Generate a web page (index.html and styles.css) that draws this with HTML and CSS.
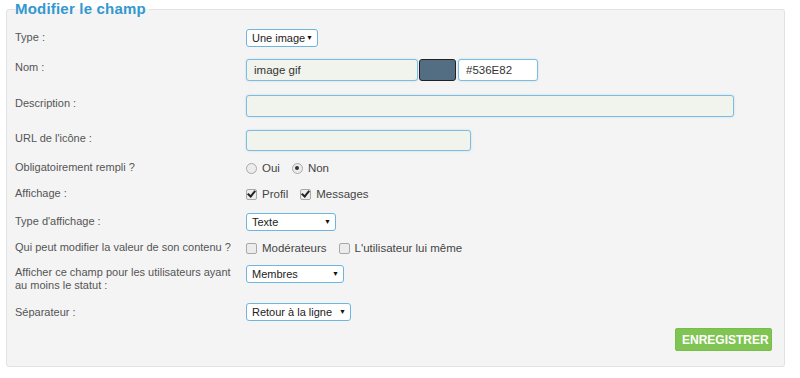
FILE: index.html
```html
<!DOCTYPE html>
<html lang="fr">
<head>
    <meta charset="UTF-8">
    <title>Modifier le champ</title>
    <link rel="stylesheet" href="styles.css">
</head>
<body>
    <form class="profile-field">
        <fieldset>
            <legend>Modifier le champ</legend>

            <div class="row row-type">
                <label>Type :</label>
                <div class="ctrl">
                    <span class="select-wrap w-type"><select><option>Une image</option></select></span>
                </div>
            </div>

            <div class="row row-nom">
                <label>Nom :</label>
                <div class="ctrl">
                    <input type="text" class="inp inp-nom" value="image gif">
                    <span class="swatch"></span>
                    <input type="text" class="inp inp-hex" value="#536E82">
                </div>
            </div>

            <div class="row row-desc">
                <label>Description :</label>
                <div class="ctrl">
                    <input type="text" class="inp inp-desc">
                </div>
            </div>

            <div class="row row-url">
                <label>URL de l'icône :</label>
                <div class="ctrl">
                    <input type="text" class="inp inp-url">
                </div>
            </div>

            <div class="row row-req">
                <label>Obligatoirement rempli ?</label>
                <div class="ctrl choices">
                    <span class="choice"><span class="radio"></span>Oui</span>
                    <span class="choice"><span class="radio on"></span>Non</span>
                </div>
            </div>

            <div class="row row-aff">
                <label>Affichage :</label>
                <div class="ctrl choices">
                    <span class="choice"><span class="check on"></span>Profil</span>
                    <span class="choice"><span class="check on"></span>Messages</span>
                </div>
            </div>

            <div class="row row-taff">
                <label>Type d'affichage :</label>
                <div class="ctrl">
                    <span class="select-wrap w-taff"><select><option>Texte</option></select></span>
                </div>
            </div>

            <div class="row row-qui">
                <label>Qui peut modifier la valeur de son contenu ?</label>
                <div class="ctrl choices">
                    <span class="choice"><span class="check"></span>Modérateurs</span>
                    <span class="choice"><span class="check"></span>L'utilisateur lui même</span>
                </div>
            </div>

            <div class="row row-stat">
                <label>Afficher ce champ pour les utilisateurs ayant au moins le statut :</label>
                <div class="ctrl">
                    <span class="select-wrap w-stat"><select><option>Membres</option></select></span>
                </div>
            </div>

            <div class="row row-sep">
                <label>Séparateur :</label>
                <div class="ctrl">
                    <span class="select-wrap w-sep"><select><option>Retour à la ligne</option></select></span>
                </div>
            </div>

            <div class="actions">
                <button type="button" class="btn-save">ENREGISTRER</button>
            </div>
        </fieldset>
    </form>
</body>
</html>
```

FILE: styles.css
```css
body {
    margin: 0;
    background: #fff;
    font-family: "Liberation Sans", Arial, sans-serif;
    font-size: 11px;
    color: #555;
}
fieldset {
    margin: 0 0 0 6px;
    width: 779px;
    height: 367px;
    box-sizing: border-box;
    padding: 11px 8px 0 8px;
    border: 1px solid #e2e2e2;
    border-radius: 3px;
    background: #f4f4f4;
}
legend {
    padding: 0 3px 0 0;
    font-size: 15px;
    font-weight: bold;
    line-height: 18px;
    color: #3498d0;
    letter-spacing: 0.2px;
}
.row {
    display: grid;
    grid-template-columns: 231px 1fr;
    align-items: start;
}
.row label {
    line-height: 13px;
    padding: 2px 8px 0 0;
}
.ctrl {
    display: flex;
    align-items: center;
}
.row-type { height: 30px; }
.row-nom { height: 36px; }
.row-desc { height: 35px; }
.row-url { height: 31px; }
.row-req { height: 26px; }
.row-aff { height: 26px; }
.row-taff { height: 28px; }
.row-qui { height: 24px; }
.row-stat { height: 38px; }
.row-sep { height: 25px; }
.row-req label, .row-aff label, .row-qui label { padding-top: 0; }
.row-stat label { padding-top: 1px; }
.row-sep label { padding-top: 3px; }

.inp {
    box-sizing: border-box;
    height: 22px;
    padding: 0 7px;
    border: 1px solid #7dbde0;
    border-radius: 3px;
    box-shadow: 0 0 2px rgba(80, 160, 210, 0.35);
    background: #f1f4ec;
    font-family: "Liberation Sans", Arial, sans-serif;
    font-size: 11.5px;
    color: #333;
    outline: none;
}
.inp-nom { width: 172px; }
.inp-hex { width: 80px; background: #fff; }
.inp-desc { width: 488px; }
.inp-url { width: 225px; height: 21px; }
.swatch {
    box-sizing: border-box;
    width: 37px;
    height: 22px;
    margin: 0 2px 0 1px;
    border: 1px solid #222;
    border-radius: 3px;
    background: #536e82;
}

.select-wrap {
    position: relative;
    display: inline-block;
}
.select-wrap select {
    appearance: none;
    -webkit-appearance: none;
    box-sizing: border-box;
    width: 100%;
    height: 18px;
    padding: 0 0 0 5px;
    border: 1px solid #6eb6df;
    border-radius: 3px;
    background: #fff;
    font-family: "Liberation Sans", Arial, sans-serif;
    font-size: 11px;
    color: #222;
    outline: none;
}
.select-wrap::after {
    content: "\25BC";
    position: absolute;
    right: 5px;
    top: 5px;
    font-size: 7px;
    line-height: 7px;
    color: #111;
    pointer-events: none;
}
.w-type { width: 72px; }
.w-taff { width: 90px; }
.w-stat { width: 98px; }
.w-sep { width: 105px; }

.choices { gap: 12px; }
.choice {
    display: inline-flex;
    align-items: center;
    gap: 5px;
    font-size: 11.5px;
    line-height: 14px;
    color: #444;
}
.radio, .check {
    box-sizing: border-box;
    width: 11px;
    height: 11px;
    border: 1px solid #a8a8a8;
    background: #ececec;
    display: inline-flex;
    align-items: center;
    justify-content: center;
}
.radio { border-radius: 50%; }
.radio.on::after {
    content: "";
    width: 4px;
    height: 4px;
    border-radius: 50%;
    background: #333;
}
.check { border-radius: 2px; }
.check.on::after {
    content: "";
    width: 3px;
    height: 6px;
    margin-top: -2px;
    border: solid #222;
    border-width: 0 2px 2px 0;
    transform: rotate(40deg);
}

.actions {
    display: flex;
    justify-content: flex-end;
    padding-right: 4px;
}
.btn-save {
    width: 97px;
    height: 23px;
    border: 1px solid #76bd4a;
    border-radius: 2px;
    background: #80c454;
    color: #fff;
    font-family: "Liberation Sans", Arial, sans-serif;
    font-size: 12px;
    font-weight: bold;
    cursor: pointer;
}
```
